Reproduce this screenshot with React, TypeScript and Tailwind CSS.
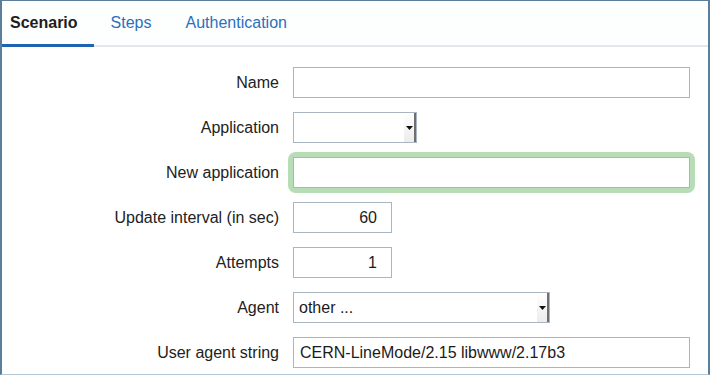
import type { ReactNode } from "react";

function Select({ value, width }: { value: string; width: string }) {
  return (
    <div className={`${width} h-[31px] flex border border-[#a9b6c2] bg-white`}>
      <div className="flex-1 flex items-center pl-[5px] text-[16px] text-[#1b1b1b]">{value}</div>
      {/* scroll-button look */}
      <div className="w-[12px] h-full flex items-center justify-center bg-gradient-to-b from-white to-[#ececec] border-r-2 border-[#6f6f6f]">
        <svg width="7" height="4" viewBox="0 0 7 4">
          <path d="M0 0h7L3.5 4z" fill="#111" />
        </svg>
      </div>
    </div>
  );
}

function Input({ width, value, right }: { width: string; value?: string; right?: boolean }) {
  return (
    <div
      className={`${width} h-[31px] flex items-center border border-[#a9b6c2] bg-white px-[6px] text-[16px] text-[#1b1b1b] ${
        right ? "justify-end pr-[14px]" : ""
      }`}
    >
      {value}
    </div>
  );
}

function Row({ label, children }: { label: string; children: ReactNode }) {
  return (
    <div className="flex items-center h-[31px]">
      <div className="w-[277px] text-right text-[16px] text-[#222]">{label}</div>
      <div className="ml-[14px] flex items-center">{children}</div>
    </div>
  );
}

export default function App() {
  return (
    <div
      className="w-[710px] h-[375px] bg-white border-t border-l-2 border-r-2 border-b border-t-[#5b7e9a] border-l-[#5b7e9a] border-r-[#5b7e9a] border-b-[#b4c7d6] flex flex-col overflow-hidden"
      style={{ fontFamily: '"Liberation Sans", Arial, sans-serif' }}
    >
      {/* Tabs */}
      <div className="h-[46px] flex border-b-2 border-[#e1e7eb] bg-[#fdfefe]">
        <div className="pl-2 pr-4 flex items-center font-bold text-[16px] text-[#1d1d1d] border-b-[3px] border-[#1e64b0] -mb-[2px]">
          Scenario
        </div>
        <div className="px-[17px] flex items-center text-[16px] text-[#2a70bd]">Steps</div>
        <div className="px-[17px] flex items-center text-[16px] text-[#2a70bd]">Authentication</div>
      </div>

      {/* Form */}
      <div className="flex flex-col gap-[14px] pt-[20px]">
        <Row label="Name">
          <Input width="w-[397px]" />
        </Row>
        <Row label="Application">
          <Select value="" width="w-[124px]" />
        </Row>
        <Row label="New application">
          <div className="rounded-[3px] ring-[5px] ring-[#b6ddb5]">
            <Input width="w-[397px]" />
          </div>
        </Row>
        <Row label="Update interval (in sec)">
          <Input width="w-[99px]" value="60" right />
        </Row>
        <Row label="Attempts">
          <Input width="w-[99px]" value="1" right />
        </Row>
        <Row label="Agent">
          <Select value="other ..." width="w-[257px]" />
        </Row>
        <Row label="User agent string">
          <Input width="w-[397px]" value="CERN-LineMode/2.15 libwww/2.17b3" />
        </Row>
      </div>
    </div>
  );
}
